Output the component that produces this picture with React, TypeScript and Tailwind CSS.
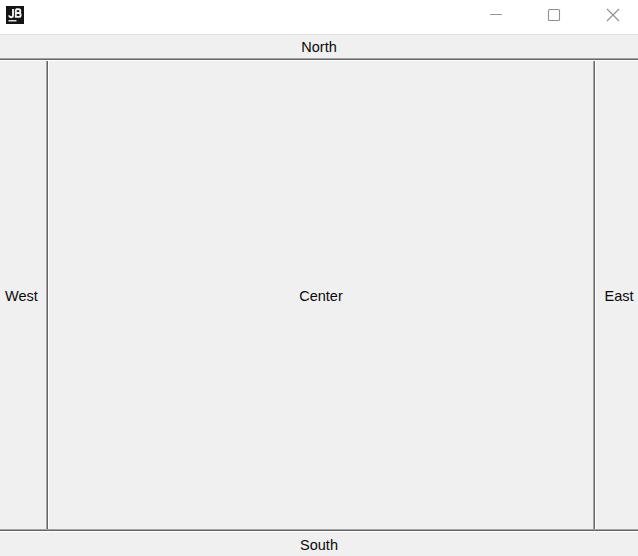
export default function App() {
  const font = "font-['Liberation_Sans',Arial,sans-serif] text-[14.5px] text-[#0a0a0a] leading-none";
  return (
    <div className={`w-[638px] h-[556px] flex flex-col overflow-hidden bg-[#f0f0f0] ${font}`}>
      <div className="h-[35px] shrink-0 bg-white border-b border-[#e2e2e2] flex items-start">
        <svg className="ml-[6px] mt-[6px]" width="18" height="18" viewBox="0 0 18 18" aria-label="JB logo">
          <rect width="18" height="18" fill="#141414" />
          <path d="M7 3V9.2C7 10.6 6.2 11.2 5.1 11.2C4 11.2 3.2 10.6 3 9.4" fill="none" stroke="#f2f2f2" strokeWidth="1.9" />
          <path d="M9.8 3.2H12.8C14.8 3.2 14.8 7 12.8 7H9.8M12.8 7C15.3 7 15.3 10.9 12.8 10.9H9.8V3.2" fill="none" stroke="#f2f2f2" strokeWidth="1.9" />
          <rect x="2.5" y="14" width="8" height="1.5" fill="#e0e0e0" />
        </svg>
        <div className="ml-auto flex">
          <svg className="mr-[44px] mt-[9px]" width="14" height="12" viewBox="0 0 14 12" aria-label="Minimize">
            <path d="M1 5.5H13" stroke="#999" strokeWidth="1" />
          </svg>
          <svg className="mr-[45px] mt-[8px]" width="14" height="14" viewBox="0 0 14 14" aria-label="Maximize">
            <rect x="1.5" y="1.5" width="11" height="11" rx="1" fill="none" stroke="#8f8f8f" strokeWidth="1.1" />
          </svg>
          <svg className="mr-[18px] mt-[8px]" width="14" height="14" viewBox="0 0 14 14" aria-label="Close">
            <path d="M1 1L13 13M13 1L1 13" stroke="#8f8f8f" strokeWidth="1.1" />
          </svg>
        </div>
      </div>
      <div className="h-[23px] shrink-0 flex items-center justify-center pt-[2px]">North</div>
      <div className="h-[1px] shrink-0 bg-[#a3a3a3]" />
      <div className="h-[1px] shrink-0 bg-[#666]" />
      <div className="h-[1px] shrink-0 bg-white" />
      <div className="h-[468px] shrink-0 flex">
        <div className="w-[46px] shrink-0 flex items-center justify-center pr-[3px] pt-[2px]">West</div>
        <div className="w-[1px] shrink-0 bg-[#a3a3a3]" />
        <div className="w-[1px] shrink-0 bg-[#666]" />
        <div className="w-[1px] shrink-0 bg-white" />
        <div className="flex-1 flex items-center justify-center pt-[2px]">Center</div>
        <div className="w-[1px] shrink-0 bg-[#a3a3a3]" />
        <div className="w-[1px] shrink-0 bg-[#666]" />
        <div className="w-[1px] shrink-0 bg-white" />
        <div className="w-[42px] shrink-0 flex items-center justify-center pl-[4px] pt-[2px]">East</div>
      </div>
      <div className="h-[1px] shrink-0 bg-[#a3a3a3]" />
      <div className="h-[1px] shrink-0 bg-[#666]" />
      <div className="h-[1px] shrink-0 bg-white" />
      <div className="flex-1 flex items-center justify-center pt-[2px]">South</div>
    </div>
  );
}
